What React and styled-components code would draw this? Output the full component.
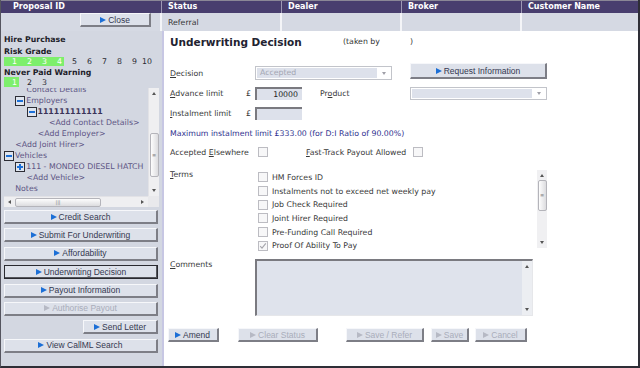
import React from 'react';
import styled, { createGlobalStyle, css } from 'styled-components';

const GlobalStyle = createGlobalStyle`
  html, body { margin: 0; padding: 0; background: #ffffff; }
  * { box-sizing: border-box; }
`;

const Frame = styled.div`
  width: 640px;
  height: 368px;
  display: flex;
  flex-direction: column;
  border-left: 1px solid #55555f;
  border-right: 2px solid #2e2e36;
  border-bottom: 2px solid #2e2e36;
  overflow: hidden;
  font-family: "DejaVu Sans", Verdana, sans-serif;
  font-size: 7.8px;
  color: #333333;
`;

const HeaderRow = styled.div`
  display: flex;
  height: 13px;
  flex: none;
  background: #483e6e;
  border-top: 1px solid #8a8796;
`;

const HeaderCell = styled.div`
  width: ${p => p.$w}px;
  flex: ${p => (p.$w ? 'none' : 1)};
  padding-left: ${p => p.$pad || 6}px;
  color: #ffffff;
  font-weight: bold;
  font-size: 8px;
  line-height: 12px;
  border-right: 1px solid #9d98b4;
  &:last-child { border-right: none; }
`;

const InfoRow = styled.div`
  display: flex;
  height: 18px;
  flex: none;
  background: #d5d9e3;
`;

const InfoCell = styled.div`
  width: ${p => p.$w}px;
  flex: ${p => (p.$w ? 'none' : 1)};
  display: flex;
  align-items: center;
  justify-content: ${p => (p.$right ? 'flex-end' : 'flex-start')};
  padding: 0 ${p => (p.$right ? 9 : 0)}px 0 6px;
  border-right: 2px solid #f4f5f8;
  &:last-child { border-right: none; }
`;

const Body = styled.div`
  flex: 1;
  display: flex;
  min-height: 0;
`;

const Sidebar = styled.div`
  width: 161px;
  flex: none;
  background: #d3d7e1;
  padding: 3px 4px 0 3px;
  display: flex;
  flex-direction: column;
`;

const SideTitle = styled.div`
  font-weight: bold;
  color: #1e1e2a;
  line-height: ${p => p.$lh || 11.5}px;
  margin-top: ${p => p.$mt || 0}px;
`;

const GradeRow = styled.div`
  display: flex;
  height: ${p => p.$h || 9}px;
`;

const GradeCell = styled.div`
  width: 15px;
  text-align: right;
  padding-right: 2px;
  line-height: inherit;
  display: flex;
  align-items: center;
  justify-content: flex-end;
  background: ${p => (p.$on ? '#7def6c' : 'transparent')};
  color: ${p => (p.$on ? '#ffffff' : '#2a2a33')};
`;

const TreeBox = styled.div`
  margin-top: 1px;
  height: 119px;
  display: grid;
  grid-template-columns: 1fr 11px;
  grid-template-rows: 1fr 11px;
  margin-right: -1px;
`;

const TreeView = styled.div`
  overflow: hidden;
  padding-top: 0;
`;

const TreeInner = styled.div`
  margin-top: -4px;
`;

const TreeItem = styled.div`
  display: flex;
  align-items: center;
  height: 11px;
  white-space: nowrap;
  padding-left: ${p => p.$level * 11.25}px;
  color: ${p => (p.$bold ? '#3a3358' : '#5d5584')};
  font-weight: ${p => (p.$bold ? 'bold' : 'normal')};
`;

const Expander = styled.span`
  position: relative;
  flex: none;
  width: 10px;
  height: 10px;
  margin-right: 1px;
  border: 1px solid #2d2d35;
  background: #dfe5ef;
  &::before {
    content: '';
    position: absolute;
    left: 1px;
    top: 3px;
    width: 6px;
    height: 2px;
    background: #1c70d8;
  }
  ${p => p.$plus && css`
    &::after {
      content: '';
      position: absolute;
      left: 3px;
      top: 1px;
      width: 2px;
      height: 6px;
      background: #1c70d8;
    }
  `}
`;

const VTrack = styled.div`
  display: flex;
  flex-direction: column;
  align-items: center;
  background: #efeff1;
  border-left: 1px solid #e2e2e6;
`;

const HTrack = styled.div`
  display: flex;
  align-items: center;
  background: #efeff1;
  border-top: 1px solid #e2e2e6;
`;

const Corner = styled.div`
  background: #e9e9ec;
`;

const ArrowCap = styled.div`
  flex: none;
  width: 11px;
  height: 11px;
  display: flex;
  align-items: center;
  justify-content: center;
  &::before {
    content: '';
    border: 2.5px solid transparent;
    ${p => p.$dir === 'up' && css`border-bottom: 3px solid #555; border-top-width: 0;`}
    ${p => p.$dir === 'down' && css`border-top: 3px solid #555; border-bottom-width: 0;`}
    ${p => p.$dir === 'left' && css`border-right: 3px solid #555; border-left-width: 0;`}
    ${p => p.$dir === 'right' && css`border-left: 3px solid #555; border-right-width: 0;`}
  }
`;

const Thumb = styled.div`
  flex: none;
  display: flex;
  align-items: center;
  justify-content: center;
  border: 1px solid #b4b4ba;
  border-radius: 2px;
  background: linear-gradient(${p => (p.$horizontal ? '180deg' : '90deg')}, #fdfdfd, #dcdcdf);
  color: #777;
  font-size: 5px;
  line-height: 1;
  ${p => (p.$horizontal
    ? css`height: 9px; width: ${p.$size}px; margin-left: ${p.$offset}px;`
    : css`width: 9px; height: ${p.$size}px; margin-top: ${p.$offset}px;`)}
`;

const Spacer = styled.div`
  flex: 1;
`;

const NavList = styled.div`
  margin-top: 3px;
  display: flex;
  flex-direction: column;
  gap: 4.4px;
`;

const Button = styled.div`
  height: ${p => p.$h || 14}px;
  width: ${p => (p.$w ? `${p.$w}px` : 'auto')};
  align-self: ${p => (p.$end ? 'flex-end' : 'stretch')};
  margin-left: ${p => p.$ml || 0}px;
  flex: none;
  display: flex;
  align-items: center;
  justify-content: ${p => (p.$left ? 'flex-start' : 'center')};
  padding-left: ${p => (p.$left ? 6 : 0)}px;
  background: #dde1ea;
  font-family: "Liberation Sans", Arial, sans-serif;
  font-size: 8.5px;
  color: ${p => (p.$disabled ? '#a9adba' : '#343850')};
  border-top: 1px solid #f6f7fa;
  border-left: 1px solid #f6f7fa;
  border-right: 2px solid #7d7e86;
  border-bottom: 2px solid #7d7e86;
  ${p => p.$active && css`
    border: 1px solid #2a2a30;
    box-shadow: inset -1px -1px 0 #55565c;
  `}
`;

const Arrow = styled.span`
  width: 0;
  height: 0;
  margin-right: 2px;
  border-left: 6px solid ${p => (p.$disabled ? '#b6b9c4' : '#1c6fd6')};
  border-top: 3.5px solid transparent;
  border-bottom: 3.5px solid transparent;
`;

const Main = styled.div`
  flex: 1;
  background: #ffffff;
  border-left: 2px solid #c7c7e3;
  padding-left: 6px;
  display: flex;
  flex-direction: column;
`;

const TitleRow = styled.div`
  height: 32px;
  padding-top: 4px;
  display: flex;
  align-items: flex-start;
`;

const Title = styled.div`
  width: 173px;
  font-weight: bold;
  font-size: 10.5px;
  line-height: 14px;
  color: #222230;
`;

const TakenBy = styled.div`
  display: flex;
  line-height: 14px;
  color: #333;
  span:first-child { width: 67px; }
`;

const FormRow = styled.div`
  display: flex;
  align-items: center;
  height: ${p => p.$h || 20}px;
  margin-top: ${p => p.$mt || 0}px;
`;

const Label = styled.div`
  width: ${p => p.$w}px;
  flex: none;
  margin-left: ${p => p.$ml || 0}px;
  color: #383838;
  white-space: nowrap;
`;

const Currency = styled.div`
  width: 9px;
  flex: none;
  color: #383838;
`;

const Select = styled.div`
  width: ${p => p.$w}px;
  height: ${p => p.$h || 14}px;
  flex: none;
  display: flex;
  align-items: center;
  border: 1px solid #c2c4ca;
  background: #ffffff;
  padding: 1px;
`;

const SelectValue = styled.div`
  flex: 1;
  height: 100%;
  background: #dde1eb;
  color: #a3a6b2;
  padding-left: 3px;
  line-height: 10px;
`;

const Caret = styled.div`
  width: 13px;
  display: flex;
  justify-content: center;
  &::before {
    content: '';
    border-left: 2.5px solid transparent;
    border-right: 2.5px solid transparent;
    border-top: 3px solid #a0a0a8;
  }
`;

const TextInput = styled.div`
  width: 47px;
  height: 13px;
  flex: none;
  background: #dde1eb;
  border-top: 2px solid #7a7a80;
  border-left: 2px solid #7a7a80;
  text-align: right;
  padding-right: 4px;
  line-height: 11px;
  color: #222;
`;

const Note = styled.div`
  color: #2e2f8e;
  white-space: nowrap;
`;

const Box = styled.span`
  width: 10px;
  height: 10px;
  flex: none;
  display: inline-flex;
  align-items: center;
  justify-content: center;
  border: 1px solid #bcbcc2;
  background: #f7f7f8;
`;

const Block = styled.div`
  display: flex;
  align-items: flex-start;
  height: ${p => p.$h}px;
  margin-top: ${p => p.$mt}px;
`;

const BlockLabel = styled.div`
  width: 85px;
  flex: none;
  line-height: ${p => p.$lh || 10}px;
  color: #383838;
`;

const TermsBox = styled.div`
  width: 292px;
  height: 100%;
  display: flex;
`;

const TermsList = styled.div`
  flex: 1;
  padding-left: 3px;
  padding-top: 0.5px;
`;

const TermItem = styled.div`
  height: 13.7px;
  display: flex;
  align-items: center;
  gap: 4px;
  color: #383838;
  white-space: nowrap;
`;

const SmallScroll = styled.div`
  width: 10px;
  height: 100%;
  display: flex;
  flex-direction: column;
  align-items: center;
  background: ${p => p.$bg || '#f0f0f2'};
`;

const CommentBox = styled.div`
  width: 278px;
  height: 57px;
  display: flex;
  background: #dfe3ec;
  border-top: 2px solid #7a7a80;
  border-left: 2px solid #7a7a80;
  border-right: 1px solid #e6e7ea;
  border-bottom: 1px solid #e6e7ea;
`;

const CommentText = styled.div`
  flex: 1;
`;

const ActionBar = styled.div`
  display: flex;
  margin-top: 12px;
  margin-left: -2px;
`;

function Scrollbar({ offset, size }) {
  return (
    <VTrack>
      <ArrowCap $dir="up" />
      <Thumb $offset={offset} $size={size}>≡</Thumb>
      <Spacer />
      <ArrowCap $dir="down" />
    </VTrack>
  );
}

const treeItems = [
  { level: 2, text: 'Contact Details' },
  { level: 1, text: 'Employers', box: 'minus' },
  { level: 2, text: '111111111111', box: 'minus', bold: true },
  { level: 4, text: '<Add Contact Details>' },
  { level: 3, text: '<Add Employer>' },
  { level: 1, text: '<Add Joint Hirer>' },
  { level: 0, text: 'Vehicles', box: 'minus' },
  { level: 1, text: '111 - MONDEO DIESEL HATCH', box: 'plus' },
  { level: 2, text: '<Add Vehicle>' },
  { level: 1, text: 'Notes' },
];

const navItems = [
  { text: 'Credit Search' },
  { text: 'Submit For Underwriting' },
  { text: 'Affordability' },
  { text: 'Underwriting Decision', active: true },
  { text: 'Payout Information' },
  { text: 'Authorise Payout', disabled: true },
  { text: 'Send Letter', w: 75 },
  { text: 'View CallML Search' },
];

const terms = [
  'HM Forces ID',
  'Instalments not to exceed net weekly pay',
  'Job Check Required',
  'Joint Hirer Required',
  'Pre-Funding Call Required',
  'Proof Of Ability To Pay',
];

function Check() {
  return (
    <svg width="8" height="8" viewBox="0 0 8 8">
      <path d="M1.2 4.2 L3 6.2 L6.8 1.4" fill="none" stroke="#a6a6ac" strokeWidth="1.1" />
    </svg>
  );
}

export default function App() {
  return (
    <>
      <GlobalStyle />
      <Frame>
        <HeaderRow>
          <HeaderCell $w={161} $pad={12}>Proposal ID</HeaderCell>
          <HeaderCell $w={120}>Status</HeaderCell>
          <HeaderCell $w={120}>Dealer</HeaderCell>
          <HeaderCell $w={120}>Broker</HeaderCell>
          <HeaderCell>Customer Name</HeaderCell>
        </HeaderRow>
        <InfoRow>
          <InfoCell $w={161} $right>
            <Button $w={71}><Arrow />Close</Button>
          </InfoCell>
          <InfoCell $w={120}>Referral</InfoCell>
          <InfoCell $w={120} />
          <InfoCell $w={120} />
          <InfoCell />
        </InfoRow>
        <Body>
          <Sidebar>
            <SideTitle>Hire Purchase</SideTitle>
            <SideTitle>Risk Grade</SideTitle>
            <GradeRow>
              {[1, 2, 3, 4, 5, 6, 7, 8, 9, 10].map(n => (
                <GradeCell key={n} $on={n <= 4}>{n}</GradeCell>
              ))}
            </GradeRow>
            <SideTitle $mt={3} $lh={8}>Never Paid Warning</SideTitle>
            <GradeRow $h={10}>
              {[1, 2, 3].map(n => (
                <GradeCell key={n} $on={n === 1}>{n}</GradeCell>
              ))}
            </GradeRow>
            <TreeBox>
              <TreeView>
                <TreeInner>
                  {treeItems.map((t, i) => (
                    <TreeItem key={i} $level={t.level} $bold={t.bold}>
                      {t.box && <Expander $plus={t.box === 'plus'} />}
                      {t.text}
                    </TreeItem>
                  ))}
                </TreeInner>
              </TreeView>
              <Scrollbar offset={34} size={44} />
              <HTrack>
                <ArrowCap $dir="left" />
                <Thumb $horizontal $offset={0} $size={86}>|||</Thumb>
                <Spacer />
                <ArrowCap $dir="right" />
              </HTrack>
              <Corner />
            </TreeBox>
            <NavList>
              {navItems.map(n => (
                <Button key={n.text} $active={n.active} $disabled={n.disabled} $w={n.w} $end={!!n.w}>
                  <Arrow $disabled={n.disabled} />{n.text}
                </Button>
              ))}
            </NavList>
          </Sidebar>
          <Main>
            <TitleRow>
              <Title>Underwriting Decision</Title>
              <TakenBy><span>(taken by</span><span>)</span></TakenBy>
            </TitleRow>
            <FormRow>
              <Label $w={85}><u>D</u>ecision</Label>
              <Select $w={137}>
                <SelectValue>Accepted</SelectValue>
                <Caret />
              </Select>
              <Button $w={137} $h={16} $ml={18}><Arrow />Request Information</Button>
            </FormRow>
            <FormRow>
              <Label $w={76}><u>A</u>dvance limit</Label>
              <Currency>£</Currency>
              <TextInput>10000</TextInput>
              <Label $w={90} $ml={18}>Pr<u>o</u>duct</Label>
              <Select $w={137} $h={13}>
                <SelectValue />
                <Caret />
              </Select>
            </FormRow>
            <FormRow>
              <Label $w={76}><u>I</u>nstalment limit</Label>
              <Currency>£</Currency>
              <TextInput />
            </FormRow>
            <FormRow>
              <Note>Maximum instalment limit £333.00 (for D:I Ratio of 90.00%)</Note>
            </FormRow>
            <FormRow $h={18}>
              <Label $w={88}>Accepted <u>E</u>lsewhere</Label>
              <Box />
              <Label $w={107} $ml={38}><u>F</u>ast-Track Payout Allowed</Label>
              <Box />
            </FormRow>
            <Block $h={78} $mt={9}>
              <BlockLabel><u>T</u>erms</BlockLabel>
              <TermsBox>
                <TermsList>
                  {terms.map((t, i) => (
                    <TermItem key={t}>
                      <Box>{i === terms.length - 1 && <Check />}</Box>
                      {t}
                    </TermItem>
                  ))}
                </TermsList>
                <SmallScroll>
                  <ArrowCap $dir="up" />
                  <Thumb $offset={-1} $size={31}>≡</Thumb>
                  <Spacer />
                  <ArrowCap $dir="down" />
                </SmallScroll>
              </TermsBox>
            </Block>
            <Block $h={57} $mt={11}>
              <BlockLabel $lh={11}><u>C</u>omments</BlockLabel>
              <CommentBox>
                <CommentText />
                <SmallScroll $bg="#eceef2">
                  <ArrowCap $dir="up" />
                  <Spacer />
                  <ArrowCap $dir="down" />
                </SmallScroll>
              </CommentBox>
            </Block>
            <ActionBar>
              <Button $w={51} $left><Arrow />Amend</Button>
              <Button $w={80} $ml={19} $disabled><Arrow $disabled />Clear Status</Button>
              <Button $w={78} $ml={28} $disabled><Arrow $disabled />Save / Refer</Button>
              <Button $w={38} $ml={7} $disabled><Arrow $disabled />Save</Button>
              <Button $w={52} $ml={6} $disabled><Arrow $disabled />Cancel</Button>
            </ActionBar>
          </Main>
        </Body>
      </Frame>
    </>
  );
}
